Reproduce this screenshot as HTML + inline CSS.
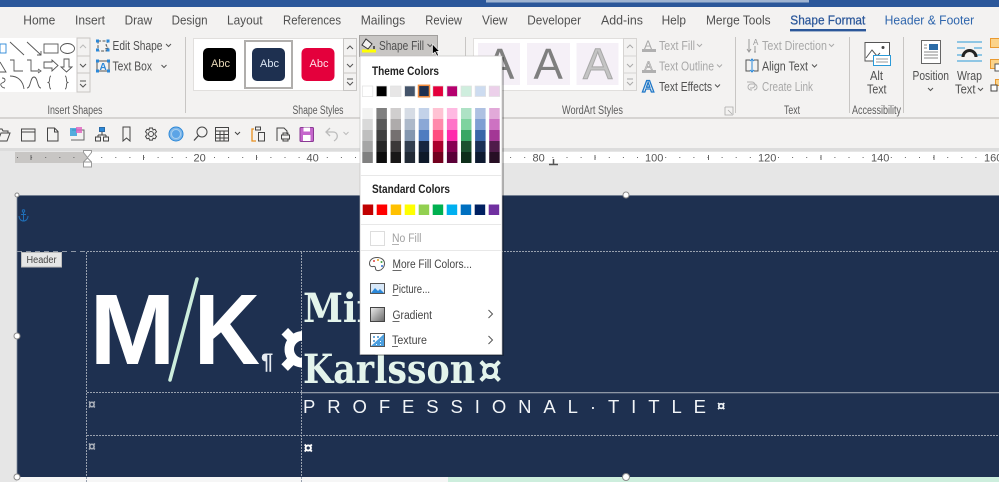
<!DOCTYPE html>
<html><head><meta charset="utf-8"><title>Word</title>
<style>
html,body{margin:0;padding:0;width:999px;height:482px;overflow:hidden;background:#e6e6e6}
svg{display:block}
body>svg{filter:blur(.35px)}
text{font-family:"Liberation Sans",sans-serif;fill:#484644;font-size:12.5px}
.t{font-size:13px;fill:#505050}
.g{font-size:11.5px;fill:#5c5c5c}
.r{font-size:12.5px;fill:#505050}
.d{font-size:12.5px;fill:#a8a8a8}
.m{font-size:11.5px;fill:#444}
.h{font-size:11.5px;font-weight:bold;fill:#222}
.n{font-size:11px;fill:#555}
.w{font-family:"DejaVu Serif","Liberation Serif",serif;font-size:40px;font-weight:bold;fill:#e4f4ec}
.ic{fill:none;stroke:#555;stroke-width:1}
.chev{fill:none;stroke:#555;stroke-width:1}
</style></head><body>
<svg width="999" height="482" viewBox="0 0 999 482" xmlns="http://www.w3.org/2000/svg">
<!-- title bar -->
<rect width="999" height="7" fill="#2b579a"/>
<rect x="486" width="323" height="2.5" fill="#9fb4d2"/>
<!-- ribbon -->
<rect y="7" width="999" height="110" fill="#f3f2f1"/>
<rect y="117" width="999" height="2" fill="#d6d4d2"/>
<rect y="119" width="999" height="29" fill="#f3f2f1"/>
<rect y="148" width="999" height="3" fill="#dcdcdc"/>
<rect y="151" width="999" height="331" fill="#e6e6e6"/>
<!-- tabs -->
<text class="t" x="23.3" y="24.5" textLength="32" lengthAdjust="spacingAndGlyphs">Home</text>
<text class="t" x="75" y="24.5" textLength="30" lengthAdjust="spacingAndGlyphs">Insert</text>
<text class="t" x="124.6" y="24.5" textLength="27.5" lengthAdjust="spacingAndGlyphs">Draw</text>
<text class="t" x="171.6" y="24.5" textLength="36" lengthAdjust="spacingAndGlyphs">Design</text>
<text class="t" x="227" y="24.5" textLength="35.6" lengthAdjust="spacingAndGlyphs">Layout</text>
<text class="t" x="283" y="24.5" textLength="58" lengthAdjust="spacingAndGlyphs">References</text>
<text class="t" x="360.7" y="24.5" textLength="44.5" lengthAdjust="spacingAndGlyphs">Mailings</text>
<text class="t" x="425.3" y="24.5" textLength="36.7" lengthAdjust="spacingAndGlyphs">Review</text>
<text class="t" x="482" y="24.5" textLength="25.5" lengthAdjust="spacingAndGlyphs">View</text>
<text class="t" x="527.3" y="24.5" textLength="53.7" lengthAdjust="spacingAndGlyphs">Developer</text>
<text class="t" x="601" y="24.5" textLength="42" lengthAdjust="spacingAndGlyphs">Add-ins</text>
<text class="t" x="661.6" y="24.5" textLength="24.4" lengthAdjust="spacingAndGlyphs">Help</text>
<text class="t" x="706" y="24.5" textLength="64.6" lengthAdjust="spacingAndGlyphs">Merge Tools</text>
<text class="t" x="790.3" y="24.5" textLength="75" lengthAdjust="spacingAndGlyphs" style="fill:#2b579a;stroke:#2b579a;stroke-width:.25">Shape Format</text>
<rect x="790" y="29" width="76" height="2.4" fill="#2b579a"/>
<text class="t" x="884.6" y="24.5" textLength="89.6" lengthAdjust="spacingAndGlyphs" style="fill:#2f66ad">Header &amp; Footer</text>

<!-- separators -->
<g fill="#c8c6c4">
<rect x="185" y="37" width="1" height="76"/><rect x="465" y="37" width="1" height="76"/>
<rect x="735" y="37" width="1" height="76"/><rect x="849" y="37" width="1" height="76"/><rect x="903" y="37" width="1" height="76"/>
</g>

<!-- shapes gallery -->
<rect x="0" y="38" width="77" height="54" fill="#fff"/>
<rect x="77" y="38" width="13" height="54" fill="#f3f2f1" stroke="#c8c6c4"/>
<path d="M77 56H90M77 73H90" stroke="#c8c6c4"/>
<path d="M80 48l3-3 3 3" class="chev" style="stroke:#bbb"/>
<path d="M80 64l3 3 3-3M80 81h6M80 84l3 3 3-3" class="chev"/>
<g fill="none" stroke="#555" stroke-width=".9">
<rect x="0" y="44" width="6" height="9" stroke="#2b88d8"/>
<path d="M10 42l14 13M27 42l14 13M37 55h4v-4"/>
<rect x="44" y="44" width="14" height="9"/>
<ellipse cx="67.500" cy="48.500" rx="7" ry="5"/>
<path d="M0 62l6 10H0M10 60h4v11h9M27 60h4v11h8M38 69l3 2-3 2"/>
<path d="M44 62h8v-2l6 5.500-6 5.500v-3h-8zM64 59h5v8h3l-5.500 5-5.500-5h3z"/>
<path d="M2 78c3 0 5 3 0 5-3 1 0 5 3 5M10 76c8 0 13 5 14 13M27 88c4 0 3-11 7-11s3 11 7 11M51 76c-2 0-1 5-2 6l-1 .5 1 .5c1 1 0 6 2 6M65 76c2 0 1 5 2 6l1 .5-1 .5c-1 1 0 6-2 6"/>
</g>
<!-- edit shape / text box -->
<path d="M98 41h10l-2 4 2 3-3 1 2 2H98z" fill="none" stroke="#555" stroke-dasharray="3 1.500"/>
<g fill="#2b88d8"><rect x="96" y="39.500" width="3" height="3"/><rect x="106.500" y="39.500" width="3" height="3"/><rect x="96" y="48.500" width="3" height="3"/><rect x="106.500" y="48.500" width="3" height="3"/></g>
<rect x="97" y="61" width="12" height="10" fill="none" stroke="#555"/>
<text x="99.500" y="70" style="font-size:10px;font-weight:bold;fill:#2b88d8">A</text>
<g fill="#2b88d8"><rect x="96" y="59.500" width="3" height="3"/><rect x="107" y="59.500" width="3" height="3"/><rect x="96" y="69.500" width="3" height="3"/><rect x="107" y="69.500" width="3" height="3"/></g>
<text class="r" x="112.500" y="50" textLength="50" lengthAdjust="spacingAndGlyphs">Edit Shape</text>
<path class="chev" d="M166 44l2.500 2.500 2.500-2.500"/>
<text class="r" x="112.500" y="70.500" textLength="39.500" lengthAdjust="spacingAndGlyphs">Text Box</text>
<path class="chev" d="M161.500 65l2.500 2.500 2.500-2.500"/>
<text class="g" x="47.500" y="114" textLength="55" lengthAdjust="spacingAndGlyphs">Insert Shapes</text>

<!-- shape styles -->
<rect x="193.500" y="38.500" width="150" height="52" fill="#fff" stroke="#e1dfdd"/>
<rect x="245" y="41" width="47" height="47" fill="#fff" stroke="#b0aeac" stroke-width="2"/>
<rect x="203" y="48" width="33" height="33" rx="5" fill="#000"/>
<rect x="252" y="48" width="33" height="33" rx="5" fill="#1e3050"/>
<rect x="301.500" y="48" width="33" height="33" rx="5" fill="#e4003c"/>
<text x="211" y="67" style="font-size:11px;fill:#e8d8b8">Abc</text>
<text x="260" y="67" style="font-size:11px;fill:#dbe6f3">Abc</text>
<text x="309.500" y="67" style="font-size:11px;fill:#ffe0e8">Abc</text>
<rect x="343.500" y="38.500" width="13" height="52" fill="#f3f2f1" stroke="#c8c6c4"/>
<path d="M343 56H357M343 73H357" stroke="#c8c6c4"/>
<path class="chev" d="M347 49l3-3 3 3M347 64l3 3 3-3M347 79h6M347 82l3 3 3-3"/>
<text class="g" x="292.500" y="114" textLength="51" lengthAdjust="spacingAndGlyphs">Shape Styles</text>

<!-- wordart -->
<rect x="473.500" y="38.500" width="150" height="52" fill="#fff" stroke="#e1dfdd"/>
<g fill="#f5f0f7"><rect x="478" y="43" width="42" height="42"/><rect x="527" y="43" width="43" height="42"/><rect x="576.500" y="43" width="42" height="42"/></g>
<text x="485" y="79" style="font-size:44px;fill:#7f7f7f">A</text>
<text x="533.500" y="79" style="font-size:44px;fill:#7f7f7f">A</text>
<text x="583" y="79" style="font-size:44px;fill:#c4c4c4;stroke:#a8a8a8;stroke-width:1">A</text>
<rect x="623.500" y="38.500" width="13" height="52" fill="#f3f2f1" stroke="#d6d4d2"/>
<path d="M623 56H637M623 73H637" stroke="#d6d4d2"/>
<path d="M627 48l3-3 3 3M627 64l3 3 3-3M627 79h6M627 82l3 3 3-3" fill="none" stroke="#aaa"/>
<text class="g" x="562" y="114" textLength="61" lengthAdjust="spacingAndGlyphs">WordArt Styles</text>
<!-- text fill etc -->
<text x="644" y="49" style="font-size:12px;fill:#a8a8a8">A</text><rect x="642" y="49" width="14" height="3" fill="#b0b0b0"/>
<text x="644.500" y="70" style="font-size:12px;fill:none;stroke:#a8a8a8;stroke-width:.7">A</text><rect x="642" y="70" width="14" height="3" fill="#b0b0b0"/>
<text x="642" y="92" style="font-size:17px;font-weight:bold;fill:none;stroke:#1f78c8;stroke-width:1.300">A</text>
<text class="d" x="659" y="50" textLength="36" lengthAdjust="spacingAndGlyphs">Text Fill</text>
<path d="M697 44l2.500 2.500 2.500-2.500" fill="none" stroke="#aaa"/>
<text class="d" x="659" y="70.500" textLength="55" lengthAdjust="spacingAndGlyphs">Text Outline</text>
<path d="M717 64.500l2.500 2.500 2.500-2.500" fill="none" stroke="#aaa"/>
<text class="r" x="659" y="91" textLength="53" lengthAdjust="spacingAndGlyphs">Text Effects</text>
<path class="chev" d="M715 84.500l2.500 2.500 2.500-2.500"/>
<path d="M725 107h8v8M725 107v8h8M728 110l4 4" fill="none" stroke="#aaa" stroke-width=".8"/>

<!-- text group -->
<path d="M749 39v13M747 49l2 3 2-3M756 52h-2M755 46v6" fill="none" stroke="#999"/>
<text x="753" y="45" style="font-size:8px;fill:#999">A</text>
<text class="d" x="762" y="50" textLength="65" lengthAdjust="spacingAndGlyphs">Text Direction</text>
<path d="M829 44l2.500 2.500 2.500-2.500" fill="none" stroke="#aaa"/>
<path d="M750 60h-4v11h4M754 60h4v11h-4" fill="none" stroke="#555"/>
<path d="M752 59v13M750 61l2-2 2 2M750 70l2 2 2-2" fill="none" stroke="#2b88d8"/>
<text class="r" x="762" y="70.500" textLength="46" lengthAdjust="spacingAndGlyphs">Align Text</text>
<path class="chev" d="M812 64.500l2.500 2.500 2.500-2.500"/>
<path d="M751 82h5a3 3 0 0 1 0 6h-2M756 90h-1a3 3 0 0 1 0-6h3a3 3 0 0 1 0 6" transform="translate(-4 0)" fill="none" stroke="#b0b0b0"/>
<text class="d" x="762" y="91" textLength="51" lengthAdjust="spacingAndGlyphs">Create Link</text>
<text class="g" x="784" y="114" textLength="16" lengthAdjust="spacingAndGlyphs">Text</text>

<!-- alt text -->
<path d="M873 61h-8V42.500h24.500V55" fill="#fff" stroke="#555"/>
<path d="M866 58l6-8 5 6 3-3" fill="none" stroke="#555"/>
<circle cx="883" cy="47.500" r="1.500" fill="#444"/>
<rect x="873.500" y="55.500" width="17" height="10" fill="#fff" stroke="#2b9ad8"/>
<path d="M876 59h12M876 62h12" stroke="#999"/>
<text class="r" x="870" y="80" textLength="13" lengthAdjust="spacingAndGlyphs">Alt</text>
<text class="r" x="867" y="93.500" textLength="19.500" lengthAdjust="spacingAndGlyphs">Text</text>
<text class="g" x="852" y="114" textLength="49" lengthAdjust="spacingAndGlyphs">Accessibility</text>

<!-- position / wrap -->
<rect x="921.500" y="40.500" width="19" height="23" fill="#fff" stroke="#666"/>
<rect x="929" y="44" width="9" height="6" fill="#2b6ca8"/>
<path d="M924 45h3M924 48h3M924 52h14M924 55h14M924 58h14" stroke="#888"/>
<text class="r" x="912.500" y="80" textLength="36.500" lengthAdjust="spacingAndGlyphs">Position</text>
<path class="chev" d="M928 88l2.500 2.500 2.500-2.500"/>
<path d="M957 42h25M957 48h8M974 48h8M957 55h6M976 55h6M957 61h25" stroke="#2b9ad8" stroke-width="1.100"/>
<path d="M963 57a6.500 6.500 0 0 1 13 0" fill="none" stroke="#222" stroke-width="3"/>
<text class="r" x="957" y="80" textLength="25" lengthAdjust="spacingAndGlyphs">Wrap</text>
<text class="r" x="955" y="93.500" textLength="20.500" lengthAdjust="spacingAndGlyphs">Text</text>
<path class="chev" d="M978 88l2.500 2.500 2.500-2.500"/>
<rect x="990.500" y="38.500" width="9" height="9" fill="#fbd38a" stroke="#ea9a30"/>
<rect x="990.500" y="59.500" width="9" height="9" fill="#fbd38a" stroke="#ea9a30"/>
<rect x="995" y="64" width="5" height="7" fill="#fff" stroke="#555"/>
<rect x="995.500" y="79.500" width="4" height="6" fill="#fbd38a" stroke="#ea9a30"/>
<rect x="991" y="85" width="6" height="6" fill="#fff" stroke="#444"/>

<!-- quick access -->
<g fill="none" stroke="#444">
<path d="M-2 129h4l1 2h5v2M-2 141h9l3-8H1l-3 8"/>
<path d="M21.500 129h13.500v12H21.500zM21.500 132h13.500M21.500 129h5"/>
<path d="M47.500 128h7l3.500 3.500V141H47.500zM54.500 128v4h3.500"/>
<path d="M72 130h12v10H71" stroke="#666"/>
<path d="M123 127h7v14l-3.500-3-3.500 3z"/>
<rect x="99.500" y="127.500" width="5" height="4" fill="#2b88d8" stroke="#2b6ca8"/>
<path d="M102 132v3M98 135h8M98 135v2M106 135v2"/>
<rect x="95.500" y="137" width="5" height="4"/><rect x="103.500" y="137" width="5" height="4"/>
<circle cx="151" cy="134" r="2.500"/>
<path d="M149.500 128h3l.5 2 2-.7 1.500 2.500-1.500 1.500v1.500l1.500 1.500-1.500 2.500-2-.7-.5 2h-3l-.5-2-2 .7-1.500-2.500 1.500-1.500v-1.500l-1.500-1.500 1.500-2.500 2 .7z"/>
<circle cx="202" cy="132" r="5"/><path d="M198.500 135.500l-4.500 5" stroke-width="1.300"/>
<rect x="215.500" y="127.500" width="13" height="13.500"/>
<path d="M215.500 131h13M215.500 134.500h13M215.500 138h13M220 131v10M224 131v10"/>
<path d="M235 132l2.500 2.500 2.500-2.500"/>
<path d="M256 141h-4v-12h2" stroke="#e8901f" stroke-width="1.300"/>
<rect x="255.500" y="127" width="5" height="3"/>
<rect x="258.500" y="132.500" width="6" height="8.500"/>
<path d="M277 141v-13h7l3 3v3"/>
<rect x="281.500" y="135" width="8" height="4"/><path d="M283 135v-2h5v2M283 139v2h5v-2"/>
<path d="M330 128l-4 4 4 4M326 132h7c5 0 6 6 1 9" stroke="#bbb" stroke-width="1.300"/>
<path d="M343.500 132l2.500 2.500 2.500-2.500" stroke="#bbb"/>
</g>
<rect x="70" y="128" width="7" height="8" fill="#2b9ad8" opacity=".8"/>
<rect x="76" y="127" width="6" height="6" fill="#e060c0" opacity=".8"/>
<circle cx="176" cy="134" r="7" fill="#7fb6e8" stroke="#2b88d8"/>
<circle cx="176" cy="134" r="4.500" fill="#5ca4e6" stroke="#a8d0f0"/>
<rect x="300" y="127.500" width="13.500" height="14" rx="1" fill="#c566cc" stroke="#8a3a94"/>
<rect x="303.500" y="127.500" width="6.500" height="4" fill="#fff"/>
<rect x="303" y="135" width="7.500" height="6" fill="#fff"/>

<!-- ruler -->
<rect x="15" y="152" width="984" height="11" fill="#fff"/>
<rect x="15" y="152" width="72" height="11" fill="#c8c6c4"/>
<line x1="101.200" y1="157.500" x2="999" y2="157.500" stroke="#666" stroke-dasharray="1 13.100"/>
<line x1="17" y1="157.500" x2="86" y2="157.500" stroke="#666" stroke-dasharray="1 13.100"/>
<g fill="#fff"><rect x="192" y="153" width="15" height="9"/><rect x="305" y="153" width="15" height="9"/><rect x="530" y="153" width="15" height="9"/><rect x="643" y="153" width="20" height="9"/><rect x="756" y="153" width="20" height="9"/><rect x="869" y="153" width="20" height="9"/><rect x="982" y="153" width="17" height="9"/></g>
<path d="M31 155v5M143.500 155v5M256.500 155v5M369.500 155v5M482.500 155v5M595 155v5M708.500 155v5M821 155v5M934 155v5" stroke="#666"/>
<text class="n" x="193.500" y="161.500">20</text>
<text class="n" x="306.500" y="161.500">40</text>
<text class="n" x="532.500" y="161.500">80</text>
<text class="n" x="645" y="161.500">100</text>
<text class="n" x="758" y="161.500">120</text>
<text class="n" x="871" y="161.500">140</text>
<text class="n" x="984" y="161.500">160</text>
<path d="M553.500 159v5M549 164.500h9" stroke="#555" stroke-width="1.500"/>

<!-- document -->
<rect x="17" y="195" width="982" height="282" fill="#1e3050"/>
<rect x="17" y="477" width="431" height="5" fill="#f6f6f6"/>
<rect x="448" y="477" width="551" height="5" fill="#cdeedd"/>
<rect x="17" y="195" width="982" height=".8" fill="#8a94a4"/>
<rect x="16.500" y="195" width=".8" height="282" fill="#9aa2ae"/>

<!-- anchor -->
<g fill="none" stroke="#1f6fb8" stroke-width="1">
<circle cx="23.500" cy="211" r="1.200"/><path d="M23.500 212.500V221M21 214.500h5M19 216c0 3 2 5 4.500 5s4.500-2 4.500-5"/>
</g>

<!-- grid -->
<g stroke="#98a0ae" stroke-width="1">
<line x1="17" y1="251.500" x2="87" y2="251.500" stroke-dasharray="5 4" stroke="#8d96a5"/>
<line x1="87" y1="251.500" x2="999" y2="251.500" stroke-dasharray="2 1"/>
<line x1="87" y1="435.500" x2="999" y2="435.500" stroke-dasharray="2 1"/>
<line x1="87" y1="392.500" x2="302" y2="392.500" stroke-dasharray="2 1"/>
<line x1="86.500" y1="252" x2="86.500" y2="482" stroke-dasharray="2 1"/>
<line x1="301.500" y1="252" x2="301.500" y2="482" stroke-dasharray="2 1"/>
</g>
<rect x="302" y="392" width="697" height="1.300" fill="#8d96a5"/>
<rect x="21.500" y="252.500" width="40" height="14.500" fill="#e6e6e6" stroke="#bdbdbd"/>
<text x="26.500" y="263" textLength="30" lengthAdjust="spacingAndGlyphs" style="font-size:10px;fill:#444">Header</text>

<!-- logo -->
<text x="89.500" y="364" textLength="86" lengthAdjust="spacingAndGlyphs" style="font-size:100px;font-weight:bold;fill:#fff">M</text>
<text x="194" y="364" textLength="66" lengthAdjust="spacingAndGlyphs" style="font-size:100px;font-weight:bold;fill:#fff">K</text>
<line x1="197" y1="279" x2="170" y2="380" stroke="#cdeedd" stroke-width="3.500" stroke-linecap="round"/>
<text x="261" y="369" style="font-size:22px;font-weight:bold;fill:#e6ebf1">¶</text>
<svg x="270" y="310" width="32" height="75" viewBox="270 310 32 75">
<text x="279" y="378" style="font-size:85px;font-weight:bold;fill:#fff">¤</text>
</svg>

<!-- name -->
<text class="w" x="303" y="322" textLength="96" lengthAdjust="spacingAndGlyphs">Mira</text>
<text class="w" x="303" y="383" textLength="172" lengthAdjust="spacingAndGlyphs">Karlsson</text>
<text x="478" y="383" style="font-size:38px;font-weight:bold;font-family:'DejaVu Serif',serif;fill:#e4f4ec">¤</text>
<text x="303" y="413" textLength="403" style="font-size:18.500px;fill:#f2f5f8">PROFESSIONAL·TITLE</text>
<text x="717" y="411" style="font-size:15px;font-weight:bold;fill:#eef2f6">¤</text>
<text x="88" y="409" style="font-size:14px;font-weight:bold;fill:#a8aeb8">¤</text>
<text x="88" y="451" style="font-size:14px;font-weight:bold;fill:#a8aeb8">¤</text>
<text x="303.500" y="453.500" style="font-size:17px;font-weight:bold;fill:#fff">¤</text>

<!-- handles -->
<g fill="#fff" stroke="#8a8a8a">
<circle cx="626" cy="195" r="3"/><circle cx="626" cy="477" r="3.500"/><circle cx="17" cy="336" r="3"/><circle cx="17" cy="477" r="3"/><circle cx="17" cy="195" r="2"/>
</g>

<!-- indent markers -->
<path d="M83.500 150.500h8v2l-4 5-4-5zM87.500 158l4 4v5h-8v-5z" fill="#fff" stroke="#999"/>
<path d="M83.500 162h8" stroke="#999"/>

<!-- shape fill button -->
<rect x="359.500" y="35.500" width="78" height="21" fill="#c8c6c4" stroke="#a19f9d"/>
<path d="M366 39l6 5-4 5-6-4z" fill="#f3f2f1" stroke="#333"/>
<path d="M374 46v3" stroke="#333" stroke-width="1.500"/>
<rect x="362" y="49.500" width="14" height="3" fill="#ffff00"/>
<text class="r" x="379" y="50" textLength="45" lengthAdjust="spacingAndGlyphs">Shape Fill</text>
<path class="chev" d="M427.500 44l2.500 2.500 2.500-2.500"/>

<!-- menu -->
<rect x="360" y="56" width="143" height="299" fill="#000" opacity=".25" transform="translate(1 1)"/>
<rect x="360" y="56" width="142" height="298.500" fill="#fff" stroke="#bdbbb9" stroke-width=".6"/>
<text class="h" x="372" y="75" textLength="67" lengthAdjust="spacingAndGlyphs">Theme Colors</text>
<g stroke="#e0e0e0" stroke-width=".7">
<rect x="362.300" y="86" width="10.500" height="10.500" fill="#fff"/>
<rect x="376.400" y="86" width="10.500" height="10.500" fill="#000"/>
<rect x="390.500" y="86" width="10.500" height="10.500" fill="#e7e6e6"/>
<rect x="404.600" y="86" width="10.500" height="10.500" fill="#44546a"/>
<rect x="432.800" y="86" width="10.500" height="10.500" fill="#e4003c"/>
<rect x="446.900" y="86" width="10.500" height="10.500" fill="#b5006e"/>
<rect x="461" y="86" width="10.500" height="10.500" fill="#cfeede"/>
<rect x="475.100" y="86" width="10.500" height="10.500" fill="#cddcf0"/>
<rect x="489.200" y="86" width="10.500" height="10.500" fill="#ecd0ea"/>
</g>
<rect x="418.500" y="85.300" width="11" height="11.500" fill="#1e3050" stroke="#f08a3c" stroke-width="1.500"/>

<g stroke="none">
<!-- shades -->
<g transform="translate(362.300 108)"><rect width="10.500" height="11" fill="#f2f2f2"/><rect y="11" width="10.500" height="11" fill="#d9d9d9"/><rect y="22" width="10.500" height="11" fill="#bfbfbf"/><rect y="33" width="10.500" height="11" fill="#a6a6a6"/><rect y="44" width="10.500" height="11" fill="#808080"/></g>
<g transform="translate(376.400 108)"><rect width="10.500" height="11" fill="#7f7f7f"/><rect y="11" width="10.500" height="11" fill="#595959"/><rect y="22" width="10.500" height="11" fill="#404040"/><rect y="33" width="10.500" height="11" fill="#262626"/><rect y="44" width="10.500" height="11" fill="#0d0d0d"/></g>
<g transform="translate(390.500 108)"><rect width="10.500" height="11" fill="#d0cece"/><rect y="11" width="10.500" height="11" fill="#aeabab"/><rect y="22" width="10.500" height="11" fill="#757070"/><rect y="33" width="10.500" height="11" fill="#3b3838"/><rect y="44" width="10.500" height="11" fill="#181717"/></g>
<g transform="translate(404.600 108)"><rect width="10.500" height="11" fill="#d6dce5"/><rect y="11" width="10.500" height="11" fill="#adb9ca"/><rect y="22" width="10.500" height="11" fill="#8497b0"/><rect y="33" width="10.500" height="11" fill="#333f50"/><rect y="44" width="10.500" height="11" fill="#222a35"/></g>
<g transform="translate(418.700 108)"><rect width="10.500" height="11" fill="#c3d2e9"/><rect y="11" width="10.500" height="11" fill="#8ba8d6"/><rect y="22" width="10.500" height="11" fill="#4f7cc0"/><rect y="33" width="10.500" height="11" fill="#162540"/><rect y="44" width="10.500" height="11" fill="#0e1929"/></g>
<g transform="translate(432.800 108)"><rect width="10.500" height="11" fill="#ffc2d3"/><rect y="11" width="10.500" height="11" fill="#ff8aab"/><rect y="22" width="10.500" height="11" fill="#ff4d80"/><rect y="33" width="10.500" height="11" fill="#ab002d"/><rect y="44" width="10.500" height="11" fill="#72001e"/></g>
<g transform="translate(446.900 108)"><rect width="10.500" height="11" fill="#ffb9e2"/><rect y="11" width="10.500" height="11" fill="#ff74c8"/><rect y="22" width="10.500" height="11" fill="#ff2bac"/><rect y="33" width="10.500" height="11" fill="#880052"/><rect y="44" width="10.500" height="11" fill="#5a0037"/></g>
<g transform="translate(461 108)"><rect width="10.500" height="11" fill="#aee2c5"/><rect y="11" width="10.500" height="11" fill="#7ed39f"/><rect y="22" width="10.500" height="11" fill="#39a665"/><rect y="33" width="10.500" height="11" fill="#1c5230"/><rect y="44" width="10.500" height="11" fill="#0e2e1a"/></g>
<g transform="translate(475.100 108)"><rect width="10.500" height="11" fill="#aec1e2"/><rect y="11" width="10.500" height="11" fill="#7f9fd3"/><rect y="22" width="10.500" height="11" fill="#3a66a8"/><rect y="33" width="10.500" height="11" fill="#1a2f55"/><rect y="44" width="10.500" height="11" fill="#0e1a30"/></g>
<g transform="translate(489.200 108)"><rect width="10.500" height="11" fill="#e2a9d9"/><rect y="11" width="10.500" height="11" fill="#cd72c2"/><rect y="22" width="10.500" height="11" fill="#a33795"/><rect y="33" width="10.500" height="11" fill="#4f1c4a"/><rect y="44" width="10.500" height="11" fill="#270f25"/></g>
</g>
<rect x="360" y="175" width="142" height="1" fill="#e8e8e8"/>
<text class="h" x="372" y="193" textLength="78" lengthAdjust="spacingAndGlyphs">Standard Colors</text>
<g>
<rect x="362.700" y="204.500" width="10.500" height="10.500" fill="#c00000"/>
<rect x="376.700" y="204.500" width="10.500" height="10.500" fill="#ff0000"/>
<rect x="390.700" y="204.500" width="10.500" height="10.500" fill="#ffc000"/>
<rect x="404.700" y="204.500" width="10.500" height="10.500" fill="#ffff00"/>
<rect x="418.700" y="204.500" width="10.500" height="10.500" fill="#92d050"/>
<rect x="432.700" y="204.500" width="10.500" height="10.500" fill="#00b050"/>
<rect x="446.700" y="204.500" width="10.500" height="10.500" fill="#00b0f0"/>
<rect x="460.700" y="204.500" width="10.500" height="10.500" fill="#0070c0"/>
<rect x="474.700" y="204.500" width="10.500" height="10.500" fill="#002060"/>
<rect x="488.700" y="204.500" width="10.500" height="10.500" fill="#7030a0"/>
</g>
<rect x="360" y="224" width="142" height="1" fill="#e8e8e8"/>
<rect x="360" y="250" width="142" height="1" fill="#e8e8e8"/>
<rect x="370.500" y="231.500" width="14" height="14" fill="#fff" stroke="#ddd"/>
<text class="m" x="392" y="242" textLength="29.500" lengthAdjust="spacingAndGlyphs" style="fill:#a0a0a0">No Fill</text>
<rect x="392" y="244" width="7" height=".8" fill="#a0a0a0"/>
<!-- palette -->
<path d="M377 257.500c-5 0-7.500 3-7.500 6 0 2.500 2 3.500 3.500 3 2-.5 2.500.5 2.500 2 0 1.500 1.500 2.500 3.500 2 3-.5 5.500-3.500 5.500-7 0-3.500-3-6-7.500-6z" fill="#fff" stroke="#555"/>
<circle cx="374" cy="261" r="1" fill="#e04040"/><circle cx="378" cy="260" r="1" fill="#e0a020"/><circle cx="381.500" cy="262" r="1" fill="#40a040"/><circle cx="382" cy="266" r="1" fill="#3070d0"/>
<text class="m" x="392.500" y="268" textLength="79.500" lengthAdjust="spacingAndGlyphs">More Fill Colors...</text>
<rect x="392.500" y="270" width="9" height=".8" fill="#444"/>
<rect x="370.500" y="283.500" width="14" height="10" fill="#d8e8f8" stroke="#555"/>
<path d="M371 293l4-5 3 3 2-2 4 4z" fill="#2b88d8"/>
<text class="m" x="392.500" y="293" textLength="37.500" lengthAdjust="spacingAndGlyphs">Picture...</text>
<rect x="392.500" y="295" width="6" height=".8" fill="#444"/>
<defs><linearGradient id="gr" x1="0" y1="0" x2="1" y2="1"><stop offset="0" stop-color="#eee"/><stop offset="1" stop-color="#666"/></linearGradient></defs>
<rect x="370.500" y="307.500" width="14" height="14" fill="url(#gr)" stroke="#444"/>
<text class="m" x="392.500" y="319" textLength="39.500" lengthAdjust="spacingAndGlyphs">Gradient</text>
<rect x="392.500" y="321" width="7" height=".8" fill="#444"/>
<path d="M488.500 310l4 4-4 4M488.500 336l4 4-4 4" fill="none" stroke="#555"/>
<rect x="370.500" y="333.500" width="14" height="13" fill="#fff" stroke="#555"/>
<path d="M371 346l13-12v12z" fill="#4a9fe0"/>
<path d="M373 336h2v2h-2zM377 336h2v2h-2zM373 340h2v2h-2zM381 338h2v2h-2z" fill="#6aa8d8"/>
<path d="M376 344h1v1h-1zM380 344h1v1h-1zM380 341h1v1h-1z" fill="#fff"/>
<text class="m" x="392" y="344" textLength="35" lengthAdjust="spacingAndGlyphs">Texture</text>
<rect x="392" y="346" width="6" height=".8" fill="#444"/>

<!-- cursor -->
<path d="M432.500 44v10l2.500-2 2 4 1.500-.7-2-4h3z" fill="#000" stroke="#fff" stroke-width=".6"/>
</svg>
</body></html>
